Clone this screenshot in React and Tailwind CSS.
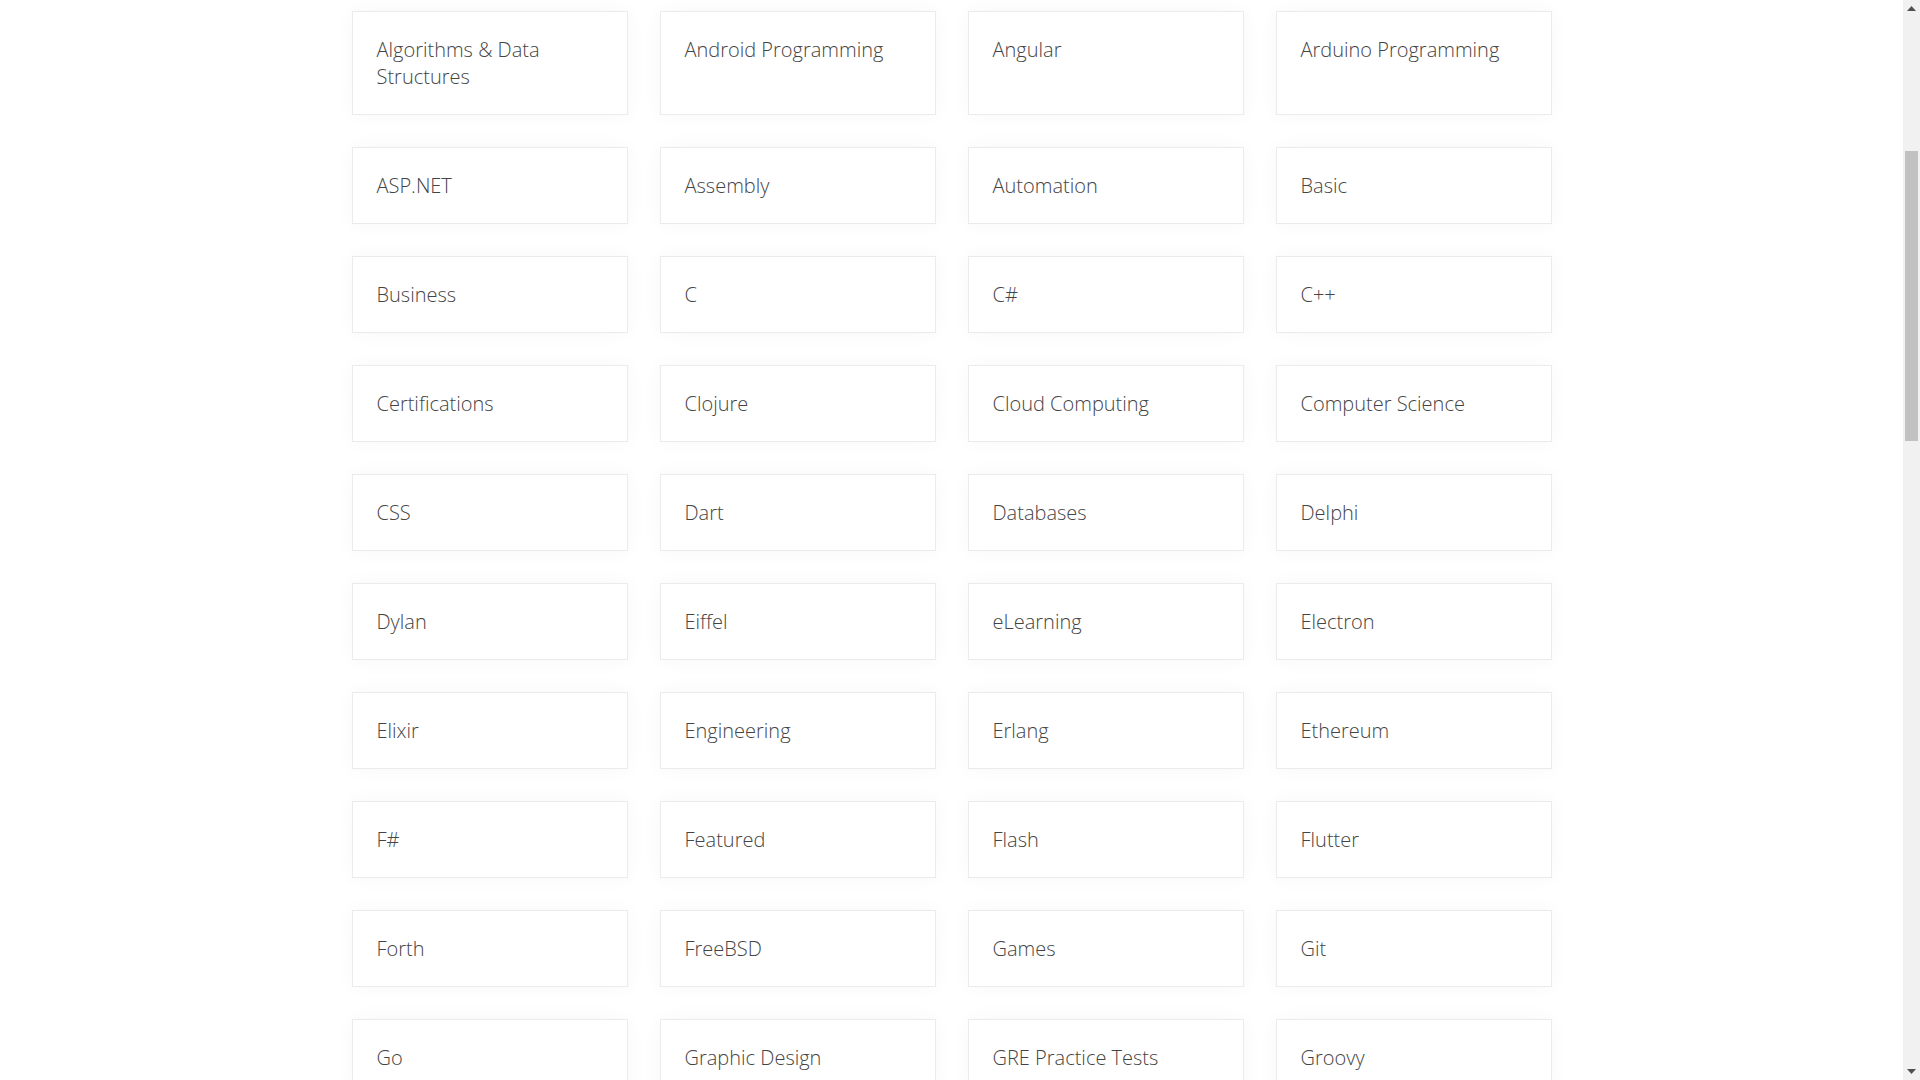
import React from "react";

const items = [
  "Algorithms & Data Structures", "Android Programming", "Angular", "Arduino Programming",
  "ASP.NET", "Assembly", "Automation", "Basic",
  "Business", "C", "C#", "C++",
  "Certifications", "Clojure", "Cloud Computing", "Computer Science",
  "CSS", "Dart", "Databases", "Delphi",
  "Dylan", "Eiffel", "eLearning", "Electron",
  "Elixir", "Engineering", "Erlang", "Ethereum",
  "F#", "Featured", "Flash", "Flutter",
  "Forth", "FreeBSD", "Games", "Git",
  "Go", "Graphic Design", "GRE Practice Tests", "Groovy",
];

export default function App() {
  return (
    <div className="flex h-[1080px] w-full overflow-hidden bg-white" style={{ fontFamily: '"Open Sans", "Noto Sans", sans-serif' }}>
      <main className="flex-1 overflow-hidden">
        <div className="mx-auto w-[1200px] pt-[11px] grid grid-cols-4 gap-x-8 gap-y-8">
          {items.map((t) => (
            <a
              key={t}
              href="#"
              className="block border border-[#ebebeb] bg-white p-6 text-[20px] leading-[27px] font-light text-[#444444] shadow-[0_0_20px_rgba(0,0,0,0.035)]"
            >
              {t}
            </a>
          ))}
        </div>
      </main>
      <div className="w-[17px] shrink-0 bg-[#f1f1f1] flex flex-col items-center">
        <div className="h-[17px] w-full flex items-center justify-center">
          <svg width="9" height="5" viewBox="0 0 9 5"><path d="M4.5 0 L9 5 L0 5 Z" fill="#505050" /></svg>
        </div>
        <div className="flex-1 w-full px-[2px]">
          <div className="mt-[134px] h-[290px] w-full bg-[#c1c1c1]" />
        </div>
        <div className="h-[17px] w-full flex items-center justify-center">
          <svg width="9" height="5" viewBox="0 0 9 5"><path d="M0 0 L9 0 L4.5 5 Z" fill="#505050" /></svg>
        </div>
      </div>
    </div>
  );
}
